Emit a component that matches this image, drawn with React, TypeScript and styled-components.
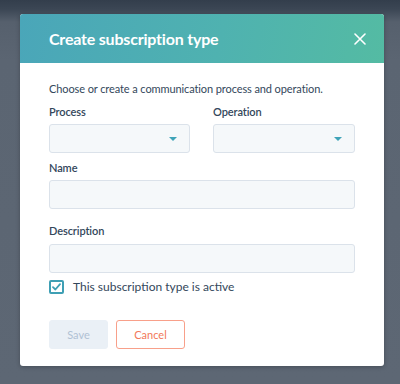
import React from "react";
import styled, { createGlobalStyle } from "styled-components";

const Global = createGlobalStyle`
  html, body { margin: 0; padding: 0; }
  body {
    width: 400px;
    height: 384px;
    overflow: hidden;
    background: linear-gradient(to bottom, #333e4c 0px, #3b4654 9px, #56606d 22px, #5b6572 60px, #5d6774 100%);
    font-family: Lato, "Noto Sans", "Liberation Sans", sans-serif;
  }
`;

const Page = styled.div`
  padding: 14px 16px 0 20px;
`;

const Modal = styled.div`
  width: 364px;
  height: 352px;
  background: #ffffff;
  border-radius: 3px;
  overflow: hidden;
  box-shadow: 0 1px 4px rgba(0, 0, 0, 0.25);
  display: flex;
  flex-direction: column;
`;

const Header = styled.div`
  height: 49px;
  flex: none;
  display: flex;
  align-items: center;
  justify-content: space-between;
  padding: 0 18px 0 29px;
  background: linear-gradient(100deg, #4aa6b9 0%, #4fb2b0 55%, #54bba3 100%);
`;

const Title = styled.h1`
  margin: 0;
  font-size: 16px;
  font-weight: 700;
  color: #ffffff;
  letter-spacing: -0.2px;
`;

const Close = styled.button`
  width: 12px;
  height: 12px;
  padding: 0;
  border: 0;
  background: none;
  display: flex;
  cursor: pointer;
`;

const Body = styled.div`
  padding: 18px 29px 17px 29px;
  display: flex;
  flex-direction: column;
  color: #33475b;
`;

const Intro = styled.p`
  margin: 0;
  font-size: 11px;
  line-height: 16px;
  letter-spacing: -0.1px;
  color: #33475b;
`;

const Row = styled.div<{ $top: number }>`
  display: grid;
  grid-template-columns: 141px 142px;
  column-gap: 23px;
  margin-top: ${(p) => p.$top}px;
`;

const Field = styled.div<{ $top?: number }>`
  display: flex;
  flex-direction: column;
  margin-top: ${(p) => p.$top ?? 0}px;
`;

const Label = styled.label<{ $gap: number }>`
  font-size: 11px;
  line-height: 16px;
  font-weight: 600;
  letter-spacing: -0.1px;
  color: #33475b;
  margin-bottom: ${(p) => p.$gap}px;
`;

const Box = styled.div`
  height: 29px;
  box-sizing: border-box;
  background: #f5f8fa;
  border: 1px solid #dbe2ea;
  border-radius: 3px;
  display: flex;
  align-items: center;
  justify-content: flex-end;
  padding-right: 12px;
`;

const Caret = styled.span`
  width: 0;
  height: 0;
  border-left: 4px solid transparent;
  border-right: 4px solid transparent;
  border-top: 4px solid #3fa3b8;
`;

const CheckRow = styled.label`
  display: flex;
  align-items: center;
  gap: 9px;
  margin-top: 7px;
  font-size: 12px;
  line-height: 14px;
  color: #33475b;
`;

const CheckBox = styled.span`
  width: 15px;
  height: 14px;
  box-sizing: border-box;
  border: 2px solid #3e9fb4;
  border-radius: 2px;
  background: #ffffff;
  display: flex;
  align-items: center;
  justify-content: center;
`;

const Buttons = styled.div`
  display: flex;
  gap: 8px;
  margin-top: 26px;
`;

const Button = styled.button<{ $kind: "disabled" | "secondary" }>`
  height: 29px;
  box-sizing: border-box;
  border-radius: 3px;
  font-family: inherit;
  font-size: 11px;
  padding: 0;
  width: ${(p) => (p.$kind === "disabled" ? "59px" : "69px")};
  background: ${(p) => (p.$kind === "disabled" ? "#eaf0f6" : "#ffffff")};
  color: ${(p) => (p.$kind === "disabled" ? "#b0c1d4" : "#f2785a")};
  border: 1px solid ${(p) => (p.$kind === "disabled" ? "#eaf0f6" : "#f8a08a")};
`;

export default function App() {
  return (
    <>
      <Global />
      <Page>
        <Modal>
          <Header>
            <Title>Create subscription type</Title>
            <Close aria-label="Close">
              <svg width="12" height="12" viewBox="0 0 12 12">
                <path d="M1 1 L11 11 M11 1 L1 11" stroke="#ffffff" strokeWidth="1.6" strokeLinecap="round" />
              </svg>
            </Close>
          </Header>
          <Body>
            <Intro>Choose or create a communication process and operation.</Intro>
            <Row $top={7}>
              <Field>
                <Label $gap={4}>Process</Label>
                <Box>
                  <Caret />
                </Box>
              </Field>
              <Field>
                <Label $gap={4}>Operation</Label>
                <Box>
                  <Caret />
                </Box>
              </Field>
            </Row>
            <Field $top={7}>
              <Label $gap={4}>Name</Label>
              <Box />
            </Field>
            <Field $top={14}>
              <Label $gap={5}>Description</Label>
              <Box />
            </Field>
            <CheckRow>
              <CheckBox>
                <svg width="9" height="8" viewBox="0 0 9 8">
                  <path d="M1 4.2 L3.4 6.5 L8 1.2" stroke="#3e9fb4" strokeWidth="1.8" fill="none" strokeLinecap="round" strokeLinejoin="round" />
                </svg>
              </CheckBox>
              This subscription type is active
            </CheckRow>
            <Buttons>
              <Button $kind="disabled" disabled>Save</Button>
              <Button $kind="secondary">Cancel</Button>
            </Buttons>
          </Body>
        </Modal>
      </Page>
    </>
  );
}
